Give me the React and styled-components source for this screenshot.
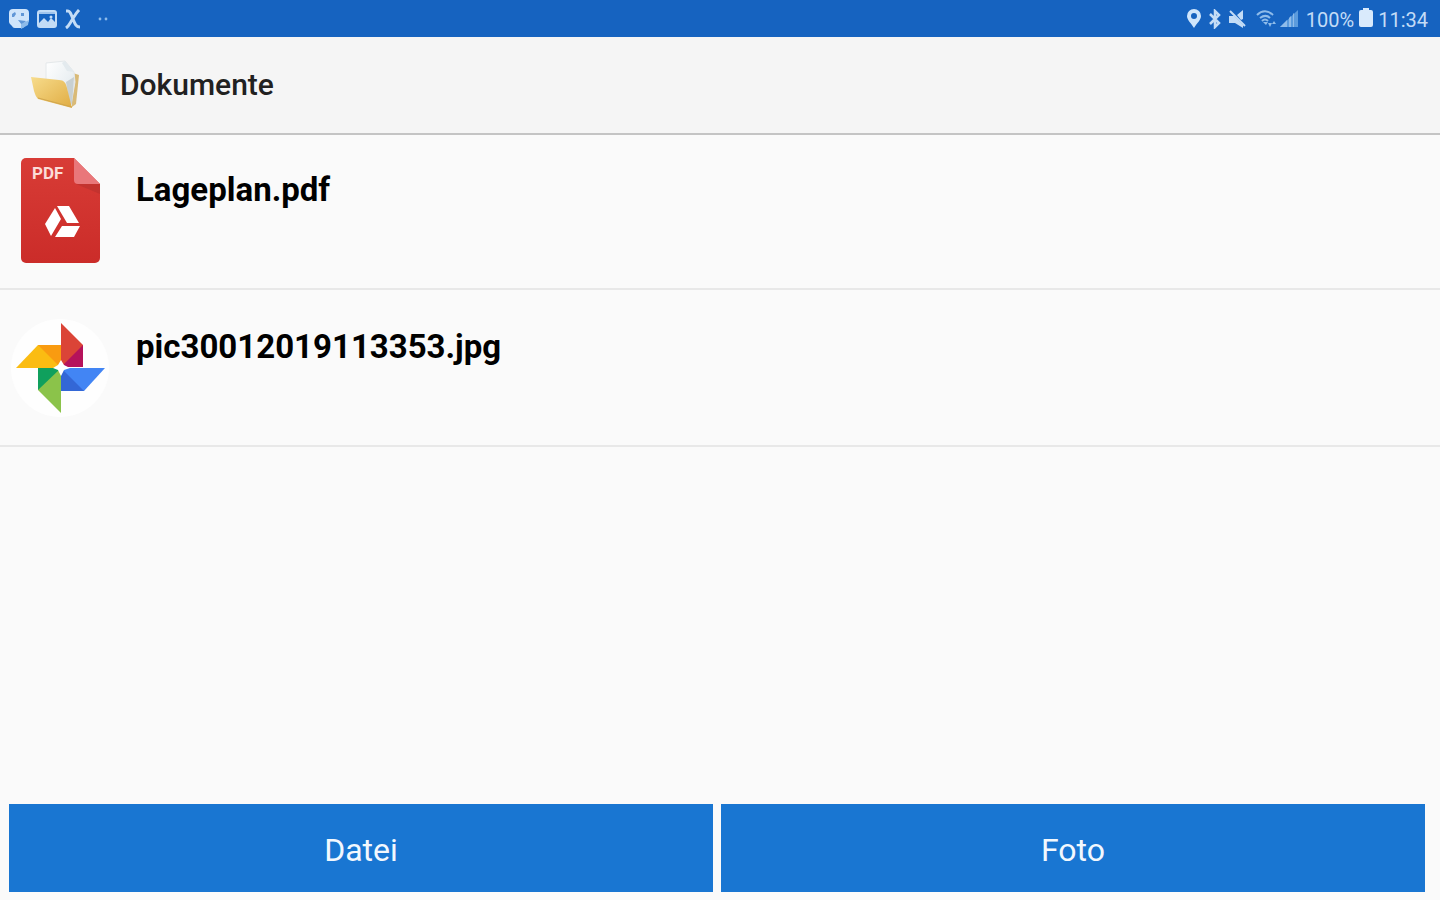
import React from "react";
import styled, { createGlobalStyle } from "styled-components";

const GlobalStyle = createGlobalStyle`
  * { box-sizing: border-box; }
  body {
    margin: 0;
    background: #fafafa;
    color: #000;
    font-family: Roboto, "Liberation Sans", sans-serif;
  }
`;

const Screen = styled.div`
  display: flex;
  flex-direction: column;
  min-height: 100vh;
`;

const StatusBar = styled.div`
  display: flex;
  align-items: center;
  justify-content: space-between;
  height: 37px;
  padding: 0 12px 0 9px;
  background: #1663c0;
  color: #c3dcf6;
`;

const StatusGroup = styled.div`
  display: flex;
  align-items: center;
  gap: ${(p) => p.$gap}px;
`;

const StatusText = styled.span`
  font-size: 20px;
  line-height: 36px;
  padding-top: 2px;
`;

const Icon = styled.svg`
  display: block;
  flex: none;
`;

const Header = styled.header`
  display: flex;
  align-items: center;
  gap: 36px;
  height: 96px;
  padding: 0 28px;
  background: #f5f5f5;
  box-shadow: 0 2px 0 #c4c4c4;
`;

const Title = styled.h1`
  margin: 0;
  font-size: 30px;
  line-height: 40px;
  font-weight: 500;
  color: #212121;
`;

const FileList = styled.ul`
  flex: 1;
  margin: 0;
  padding: 0;
  list-style: none;
`;

const FileRow = styled.li`
  display: flex;
  align-items: flex-start;
  gap: 24px;
  min-height: 157px;
  padding: 22px 8px 20px;
  border-bottom: 2px solid #e8e8e8;
`;

const FileName = styled.span`
  padding-top: 15px;
  font-size: 33px;
  line-height: 40px;
  font-weight: 700;
`;

const Actions = styled.footer`
  display: flex;
  gap: 8px;
  padding: 0 15px 8px 9px;
`;

const ActionButton = styled.button`
  flex: 1;
  height: 88px;
  padding: 4px 0 0;
  border: 0;
  border-radius: 0;
  background: #1976d2;
  color: #f2f8fe;
  font-family: inherit;
  font-size: 32px;
  line-height: 40px;
  cursor: pointer;
`;

const GalleryIcon = () => (
  <Icon width="20" height="20" viewBox="0 0 20 20" aria-hidden="true">
    <path fill="#cfe5fb" d="M4 0h12a4 4 0 0 1 4 4v8l-6 7H6a3 3 0 0 1-3-2l-2-2a4 4 0 0 1-1-3V4a4 4 0 0 1 4-4z" />
    <path fill="#1663c0" d="M3 5l3-2 1 2-2 3H3zM12 4h3v3h-3zM9 11l8 1-4 4z" opacity=".6" />
    <path fill="#8dbbea" d="M12 20v-5l8-4-1 5z" />
  </Icon>
);

const ImageIcon = () => (
  <Icon width="20" height="18" viewBox="0 0 20 18" aria-hidden="true">
    <rect x="1" y="1" width="18" height="16" rx="2" fill="none" stroke="#c3dcf6" strokeWidth="2" />
    <path fill="#c3dcf6" d="M2 13l5-5 4 4 3-4 4 4v4H2z" />
    <path fill="#c3dcf6" d="M2 2h16v2H2z" opacity=".8" />
    <circle cx="14" cy="7" r="1.5" fill="#c3dcf6" />
  </Icon>
);

const CrossIcon = () => (
  <Icon width="16" height="20" viewBox="0 0 16 20" aria-hidden="true">
    <path fill="none" stroke="#c3dcf6" strokeWidth="3" d="M1 2h2c2 0 3 3 5 8s3 8 7 8M14 1C11 4 9 8 7 11s-3 6-6 8" />
  </Icon>
);

const DotsIcon = () => (
  <Icon width="12" height="4" viewBox="0 0 12 4" aria-hidden="true">
    <circle cx="3" cy="2" r="1.4" fill="#8dbbea" />
    <circle cx="9" cy="2" r="1.4" fill="#8dbbea" />
  </Icon>
);

const PinIcon = () => (
  <Icon width="14" height="20" viewBox="0 0 14 20" aria-hidden="true">
    <path fill="#cfe5fb" fillRule="evenodd" d="M7 0a7 7 0 0 1 7 7c0 4-4 7-7 12-3-5-7-8-7-12a7 7 0 0 1 7-7zm0 4a3 3 0 1 0 0 6 3 3 0 0 0 0-6z" />
  </Icon>
);

const BluetoothIcon = () => (
  <Icon width="12" height="20" viewBox="0 0 12 20" aria-hidden="true">
    <path fill="none" stroke="#c3dcf6" strokeWidth="2.5" d="M1 5l9 9-4 4V2l4 4-9 9" />
  </Icon>
);

const MuteIcon = () => (
  <Icon width="17" height="18" viewBox="0 0 17 18" aria-hidden="true">
    <path fill="#c3dcf6" d="M0 6h5l9 9v3L6 13H0zM8 5l6-5v9l-2 1z" />
    <path stroke="#c3dcf6" strokeWidth="2" d="M1 1l15 15" />
  </Icon>
);

const WifiIcon = () => (
  <Icon width="20" height="18" viewBox="0 0 20 18" aria-hidden="true">
    <g fill="none" stroke="#8fbcea" strokeWidth="2">
      <path d="M1 5c5-5 11-5 16 0M4 8c4-3 7-3 10 0M6 11c2-2 4-2 6 0" />
    </g>
    <path fill="#8fbcea" d="M7 12h5l-2 3zM12 13l2 4 2-4zM16 14l2-3 2 3z" />
  </Icon>
);

const SignalIcon = () => (
  <Icon width="18" height="17" viewBox="0 0 18 17" aria-hidden="true">
    <path fill="#5b9bdd" d="M18 0v17H0z" />
    <path fill="#8fbcea" d="M0 17l7-7v7zM9 8l2-2v11H9zM13 4l1-1v14h-1z" />
  </Icon>
);

const BatteryIcon = () => (
  <Icon width="14" height="22" viewBox="0 0 14 22" aria-hidden="true">
    <path fill="#d9eafc" d="M4 0h6v2h2a2 2 0 0 1 2 2v13a2 2 0 0 1-2 2H2a2 2 0 0 1-2-2V4a2 2 0 0 1 2-2h2z" />
  </Icon>
);

const FolderIcon = () => (
  <Icon width="56" height="56" viewBox="0 0 56 56" aria-hidden="true">
    <defs>
      <linearGradient id="folderFront" x1="0" y1="0" x2="1" y2="1">
        <stop offset="0" stopColor="#f7dc8c" />
        <stop offset="1" stopColor="#e0ac42" />
      </linearGradient>
      <linearGradient id="folderPaper" x1="0" y1="0" x2="1" y2="1">
        <stop offset="0" stopColor="#ffffff" />
        <stop offset="1" stopColor="#dce5ea" />
      </linearGradient>
    </defs>
    <path fill="#d9ba77" d="M42 15l9 3-3 29-4 3z" />
    <path fill="url(#folderPaper)" stroke="#e4e8ea" d="M18 6l19-2 9 11 1 10-4 23-25-10z" />
    <path fill="#e3eaee" d="M34 6l3-2 9 11-7-1z" />
    <path fill="#c8d0d2" d="M38 25l8-5-2 28-3-5z" />
    <path fill="url(#folderFront)" d="M3 20l28 3c5 0 7 3 8 8l5 20-34-9C8 40 7 37 6 34z" />
    <path fill="none" stroke="#d1a64d" d="M10 41l34 9" />
  </Icon>
);

const PdfLabel = styled.text`
  font-size: 17px;
  font-weight: 700;
  fill: #fbdcd8;
`;

const PdfIcon = () => (
  <Icon width="104" height="112" viewBox="0 0 104 112" role="img" aria-label="PDF">
    <defs>
      <linearGradient id="pdfPage" x1="0" y1="0" x2="0" y2="1">
        <stop offset="0" stopColor="#d83c36" />
        <stop offset="1" stopColor="#cb2c29" />
      </linearGradient>
    </defs>
    <path fill="url(#pdfPage)" d="M18 3h48l26 26v74a5 5 0 0 1-5 5H18a5 5 0 0 1-5-5V8a5 5 0 0 1 5-5z" />
    <path fill="#b8302d" d="M68 29h24v10z" opacity=".6" />
    <path fill="#e9777a" d="M66 3l26 26H70a4 4 0 0 1-4-4z" />
    <PdfLabel x="24" y="24">PDF</PdfLabel>
    <path fill="#fff" d="M49 51h12l10 17H59zM47 53l6 11-10 17-6-12zM54 71h18l-6 11H47z" />
  </Icon>
);

const PhotosIcon = () => (
  <Icon width="104" height="112" viewBox="0 2 104 112" aria-hidden="true">
    <circle cx="52" cy="58" r="49" fill="#fefefe" />
    <path fill="#db4437" d="M53 13l22 22v22L53 55z" />
    <path fill="#b5125b" d="M75 35v22H53z" />
    <path fill="#fbbc12" d="M8 58l22-23h23v23z" />
    <path fill="#f99b10" d="M30 35h23v23z" />
    <path fill="#4285f4" d="M53 58h44L76 81H53z" />
    <path fill="#3367d6" d="M53 58l23 23H53z" />
    <path fill="#8bc34a" d="M53 58v45L30 80V58z" />
    <path fill="#10a05d" d="M30 58h23L30 80z" />
    <path fill="#fff" d="M53 50l3 5 6 3-6 2-3 6-3-6-5-2 5-3z" />
  </Icon>
);

const files = [
  { name: "Lageplan.pdf", FileIcon: PdfIcon },
  { name: "pic30012019113353.jpg", FileIcon: PhotosIcon },
];

export default function App() {
  return (
    <>
      <GlobalStyle />
      <Screen>
        <StatusBar>
          <StatusGroup $gap={16}>
            <StatusGroup $gap={8}>
              <GalleryIcon />
              <ImageIcon />
              <CrossIcon />
            </StatusGroup>
            <DotsIcon />
          </StatusGroup>
          <StatusGroup $gap={8}>
            <StatusGroup $gap={10}>
              <StatusGroup $gap={8}>
                <PinIcon />
                <BluetoothIcon />
                <MuteIcon />
              </StatusGroup>
              <StatusGroup $gap={4}>
                <WifiIcon />
                <SignalIcon />
              </StatusGroup>
            </StatusGroup>
            <StatusGroup $gap={5}>
              <StatusText>100%</StatusText>
              <BatteryIcon />
              <StatusText>11:34</StatusText>
            </StatusGroup>
          </StatusGroup>
        </StatusBar>
        <Header>
          <FolderIcon />
          <Title>Dokumente</Title>
        </Header>
        <FileList>
          {files.map(({ name, FileIcon }) => (
            <FileRow key={name}>
              <FileIcon />
              <FileName>{name}</FileName>
            </FileRow>
          ))}
        </FileList>
        <Actions>
          <ActionButton type="button">Datei</ActionButton>
          <ActionButton type="button">Foto</ActionButton>
        </Actions>
      </Screen>
    </>
  );
}
